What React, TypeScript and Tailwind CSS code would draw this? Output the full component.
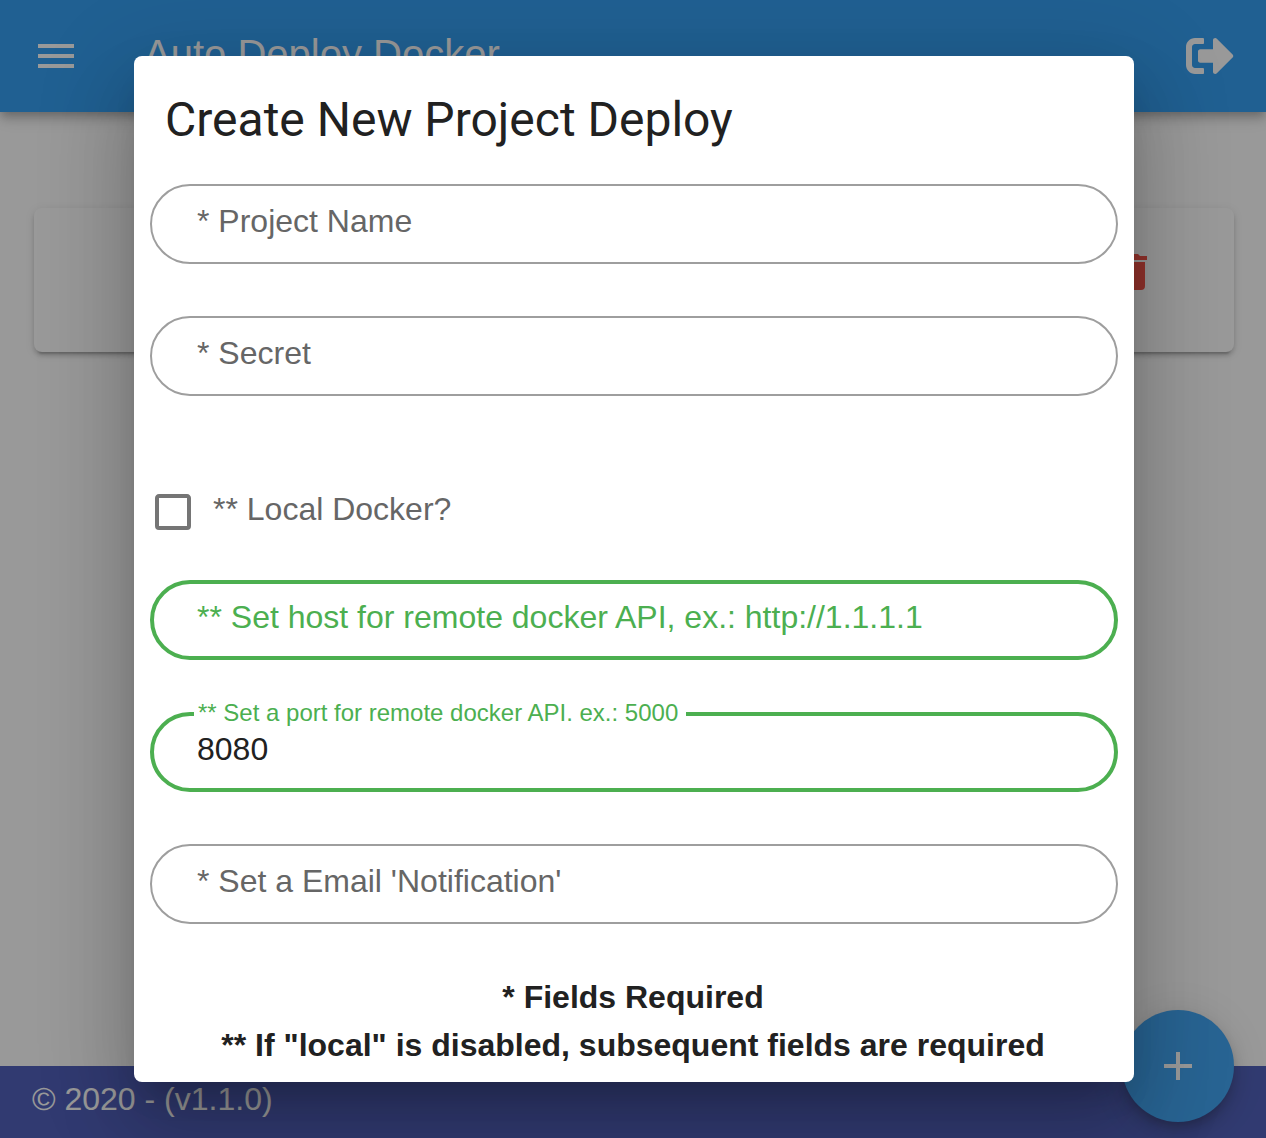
import React from "react";
import { FaSignOutAlt } from "react-icons/fa";

function Icon({ d, className = "" }: { d: string; className?: string }) {
  return (
    <svg viewBox="0 0 24 24" className={`size-12 shrink-0 fill-current ${className}`} aria-hidden="true">
      <path d={d} />
    </svg>
  );
}

const icons = {
  menu: "M3,6H21V8H3V6M3,11H21V13H3V11M3,16H21V18H3V16Z",
  trash:
    "M19,4H15.5L14.5,3H9.5L8.5,4H5V6H19M6,19A2,2 0 0,0 8,21H16A2,2 0 0,0 18,19V7H6V19Z",
  plus: "M19,13H13V19H11V13H5V11H11V5H13V11H19V13Z",
  box: "M19,3H5C3.89,3 3,3.89 3,5V19A2,2 0 0,0 5,21H19A2,2 0 0,0 21,19V5C21,3.89 20.1,3 19,3M19,5V19H5V5H19Z",
};

type FieldProps = { label: string; value?: string; active?: boolean };

function Field({ label, value, active }: FieldProps) {
  return (
    <div
      className={`relative flex h-20 items-center rounded-[40px] pb-1.5 ${
        active ? "border-4 border-[#4caf50] pl-[43px] text-[#4caf50]" : "border-2 border-[#9e9e9e] pl-[45px] text-[#666666]"
      }`}
    >
      {value ? (
        <>
          <span className="absolute -top-[19px] left-10 flex h-8 w-[492px] items-center bg-white pl-1 text-[24px] leading-8 whitespace-nowrap">
            {label}
          </span>
          <span className="text-[32px] leading-10 text-[#212121]">{value}</span>
        </>
      ) : (
        <span className="text-[32px] leading-10 whitespace-nowrap">{label}</span>
      )}
    </div>
  );
}

export default function App() {
  return (
    <div className="relative h-[1138px] w-[1266px] overflow-hidden bg-white font-['Liberation_Sans',Arial,sans-serif]">
      <div className="flex h-full flex-col">
        <header className="flex h-28 shrink-0 items-center bg-[#2196f3] px-8 text-white shadow-[0_4px_8px_-2px_rgba(0,0,0,.2),0_8px_10px_0_rgba(0,0,0,.14),0_2px_20px_0_rgba(0,0,0,.12)]">
          <Icon d={icons.menu} />
          <h1 className="ml-16 pb-1 text-[40px] leading-[60px]">Auto Deploy Docker</h1>
          <FaSignOutAlt className="ml-auto size-12" />
        </header>
        <main className="flex-1 pt-24 pr-8 pl-[34px]">
          <div className="flex h-36 justify-end rounded-lg bg-white pt-10 pr-[77px] text-[#f44336] shadow-[0_6px_2px_-4px_rgba(0,0,0,.2),0_4px_4px_0_rgba(0,0,0,.14),0_2px_10px_0_rgba(0,0,0,.12)]">
            <Icon d={icons.trash} />
          </div>
        </main>
        <footer className="flex h-[72px] shrink-0 items-center bg-[#3f51b5] px-8 pb-1.5 text-[32px] text-white">
          © 2020 - (v1.1.0)
        </footer>
      </div>
      <button className="absolute right-8 bottom-4 flex size-28 items-center justify-center rounded-full bg-[#2f9df4] text-white shadow-[0_6px_10px_-2px_rgba(0,0,0,.2),0_12px_20px_0_rgba(0,0,0,.14),0_2px_36px_0_rgba(0,0,0,.12)]">
        <Icon d={icons.plus} />
      </button>

      <div className="absolute inset-0 bg-[#212121]/46" />

      <section
        role="dialog"
        className="absolute top-14 left-[134px] flex h-[1026px] w-[1000px] flex-col rounded-lg bg-white px-4 text-[#212121] shadow-[0_22px_30px_-14px_rgba(0,0,0,.2),0_48px_76px_6px_rgba(0,0,0,.14),0_18px_92px_16px_rgba(0,0,0,.12)]"
      >
        <h2 className="mt-8 mb-8 pl-[15px] font-[Roboto,sans-serif] text-[48px] leading-[64px]">Create New Project Deploy</h2>
        <div className="flex flex-col gap-[52px]">
          <Field label="* Project Name" />
          <Field label="* Secret" />
        </div>
        <label className="mt-[92px] mb-11 -ml-px flex h-12 items-center">
          <Icon d={icons.box} className="text-[#757575]" />
          <span className="ml-4 pb-1.5 text-[32px] leading-10 text-[#666666]">** Local Docker?</span>
        </label>
        <div className="flex flex-col gap-[52px]">
          <Field active label="** Set host for remote docker API, ex.: http://1.1.1.1" />
          <Field active label="** Set a port for remote docker API. ex.: 5000" value="8080" />
          <Field label="* Set a Email 'Notification'" />
        </div>
        <div className="mt-[49px] pr-0.5 text-center text-[32px] leading-[48px] font-bold">
          <p>* Fields Required</p>
          <p>** If "local" is disabled, subsequent fields are required</p>
        </div>
      </section>
    </div>
  );
}
